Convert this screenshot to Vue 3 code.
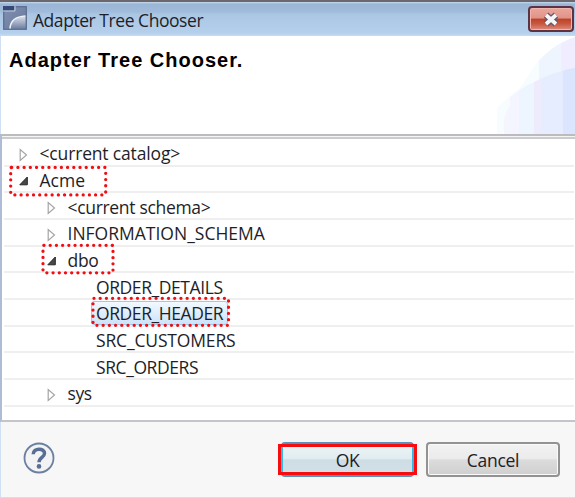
<script setup>
const rows = [
  { label: '<current catalog>', level: 0, state: 'closed', fit: 'snug' },
  { label: 'Acme', level: 0, state: 'open', mark: 'acme' },
  { label: '<current schema>', level: 1, state: 'closed', fit: 'tight' },
  { label: 'INFORMATION_SCHEMA', level: 1, state: 'closed' },
  { label: 'dbo', level: 1, state: 'open', mark: 'dbo', fit: 'tight' },
  { label: 'ORDER_DETAILS', level: 2, fit: 'tighter' },
  { label: 'ORDER_HEADER', level: 2, mark: 'header', selected: true, fit: 'tighter' },
  { label: 'SRC_CUSTOMERS', level: 2, fit: 'snug' },
  { label: 'SRC_ORDERS', level: 2, fit: 'tighter' },
  { label: 'sys', level: 1, state: 'closed', fit: 'tighter' },
]
const marks = { acme: [10.7, 2.4, 95, 27.5], dbo: [43, 0.3, 70, 27.5], header: [93, 0.3, 135.500, 27] }
</script>

<template>
  <div class="dialog">
    <header class="titlebar">
      <svg class="app-icon" width="24" height="24" viewBox="0 0 24 24">
        <defs>
          <linearGradient id="ic" x1="0" y1="0" x2="1" y2="1">
            <stop offset="0" stop-color="#8290b0" /><stop offset="1" stop-color="#65799d" />
          </linearGradient>
          <linearGradient id="sw" x1="0" y1="0" x2="0" y2="1">
            <stop offset="0" stop-color="#d8dee8" /><stop offset="1" stop-color="#6e80a2" />
          </linearGradient>
        </defs>
        <rect x=".7" y=".7" width="22.6" height="22.6" fill="url(#ic)" stroke="#5b6b8c" stroke-width="1.2" />
        <path d="M8 22.500C8.500 15 13 11 22.500 10.500V22.500Z" fill="url(#sw)" />
        <path d="M7 22.500C7.500 14 13 10.500 22.500 10" fill="none" stroke="#f1f4f8" stroke-width="1.500" />
        <path d="M0 0H11V4.500H0Z" fill="#344a78" />
        <path d="M0 5H12V0" fill="none" stroke="#c2cddd" stroke-width="1" />
      </svg>
      <span class="title">Adapter Tree Chooser</span>
      <button class="close" aria-label="Close">
        <svg width="18" height="15" viewBox="0 0 18 15">
          <path d="M4 3L14 12M14 3L4 12" stroke="#64566a" stroke-width="6.400" />
          <path d="M4 3L14 12M14 3L4 12" stroke="#f6f6f8" stroke-width="3.800" />
        </svg>
      </button>
    </header>

    <section class="banner">
      <h1>Adapter Tree Chooser.</h1>
      <svg class="swoosh" width="80" height="98" viewBox="0 0 80 98">
        <defs>
          <clipPath id="outer"><path d="M80 1C62 7 50 17 40 29C34 37 30 45 25 52C16 59 7 66 2 72V98H80Z" /></clipPath>
          <clipPath id="inner"><path d="M80 32C61 35 43 43 26 53L15 61V70C10 78 8 81 9 98H80Z" /></clipPath>
        </defs>
        <g clip-path="url(#outer)">
          <path d="M0 0H44V98H0Z" fill="#f7fdff" />
          <path d="M44 0H66V98H44Z" fill="#eef5ff" />
          <path d="M66 0H80V98H66Z" fill="#efedff" />
        </g>
        <g clip-path="url(#inner)">
          <path d="M0 0H24V98H0Z" fill="#f5f5ff" />
          <path d="M24 0H39V98H24Z" fill="#edf5ff" />
          <path d="M39 0H46V98H39Z" fill="#eeebfd" />
          <path d="M46 0H68V98H46Z" fill="#e6edfe" />
          <path d="M68 0H80V98H68Z" fill="#dce5fe" />
        </g>
      </svg>
    </section>

    <main class="tree">
      <div v-for="row in rows" :key="row.label" class="row" :class="'level-' + row.level">
        <span v-if="row.selected" class="selection"></span>
        <svg v-if="row.state" class="arrow" width="10" height="14" viewBox="0 0 10 14">
          <path v-if="row.state === 'closed'" d="M1.200 1.500V12.500L7.500 7Z" fill="#fff" stroke="#a5a5a5" stroke-width="1.200" />
          <path v-else d="M8.300 3V10.800H.8Z" fill="#484848" stroke="#252525" />
        </svg>
        <span class="label" :class="row.fit">{{ row.label }}</span>
        <svg v-if="row.mark" class="mark" width="240" height="30" viewBox="0 0 240 30">
          <rect
            :x="marks[row.mark][0]" :y="marks[row.mark][1]"
            :width="marks[row.mark][2]" :height="marks[row.mark][3]" rx="1"
          />
        </svg>
      </div>
    </main>

    <footer class="footer">
      <svg class="help" width="32" height="32" viewBox="0 0 32 32">
        <circle cx="16" cy="16" r="14.500" fill="#f3f3f5" stroke="#6b7f9f" stroke-width="1.800" />
        <path d="M10.200 12.300C10.200 5.500 21.800 5.700 21.500 11.500C21.300 15.500 16 15.300 16 20.300" fill="none" stroke="#586e94" stroke-width="3.500" />
        <circle cx="16" cy="24.400" r="2.300" fill="#586e94" />
      </svg>
      <button class="btn ok"><span>OK</span></button>
      <button class="btn cancel"><span>Cancel</span></button>
    </footer>
  </div>
</template>

<style>
body { margin: 0; overflow: hidden; }
</style>

<style scoped>
* { box-sizing: border-box; }
.dialog {
  width: 575px; height: 498px; display: flex; flex-direction: column;
  border-left: 1px solid #cfe0f3; border-bottom: 1px solid #cfe0f3;
  background: #f7f7f7; color: #1e1e28;
  font: 17.500px/26px "Open Sans", "Noto Sans", sans-serif;
}
.titlebar {
  height: 36px; flex: none; display: flex; align-items: flex-start;
  padding: 4px 1px 0 2px; margin-left: -1px; border-top: 2px solid #6c676c;
  background: linear-gradient(#c7dcf0 0, #9bb5d6 2px, #a1bbdb 10px, #aac6e3 12px, #b5d0ec 31px, #c6dcf2 34px);
}
.app-icon { margin: 0 6px 0 1px; flex: none; }
.title { line-height: 24px; letter-spacing: -.45px; white-space: nowrap; margin-top: 2px; }
.close {
  margin-left: auto; width: 46px; height: 26px; padding: 0; display: grid; place-items: center;
  border: 2px solid #5b3345; border-radius: 4px; box-shadow: inset 0 0 0 1px #f0b6ad;
  background: linear-gradient(#eaa79d 0, #e19387 46%, #bd4128 50%, #c75840 72%, #dc8e7d 100%);
}
.banner { height: 98px; flex: none; display: flex; justify-content: space-between; background: #fff; overflow: hidden; }
h1 { margin: 12px 0 0 8px; font: bold 20px/24px "Liberation Sans", Arial, sans-serif; letter-spacing: 1px; color: #000; white-space: nowrap; }
.swoosh { flex: none; }
.tree {
  height: 288px; flex: none; margin-left: -1px;
  border-left: 2px solid #afbcd8; border-top: 2px solid #bcbcbe; border-bottom: 2px solid #c4c4ca;
  background: linear-gradient(#f5f5f5 0, #f5f5f5 1px, #cccbd0 1px, #cccbd0 3px, #fff 3px);
}
.tree::before { content: ""; display: block; height: 4px; }
.row { position: relative; height: 26.670px; display: flex; align-items: center; margin: 0 1px 0 2px; border-bottom: 2px solid #efefef; }
.level-0 { padding-left: 15px; }
.level-1 { padding-left: 43px; }
.level-2 { padding-left: 92px; }
.arrow { flex: none; margin: 5px 10.500px 0 0; }
.label { position: relative; line-height: 24px; padding-top: 2px; white-space: nowrap; }
.snug { letter-spacing: -.16px; }
.tight { letter-spacing: -.32px; }
.tighter { letter-spacing: -.42px; }
.selection { position: absolute; left: 87px; top: 1px; width: 137px; height: 24px; border: 1px solid #9fc9eb; border-radius: 3px; background: linear-gradient(#f2f9ff, #cce3fa); }
.mark { position: absolute; left: -4px; top: -2px; overflow: visible; }
.mark rect { fill: none; stroke: #f20d12; stroke-width: 3.300; stroke-linecap: round; stroke-dasharray: .01 6.200; }
.footer { flex: 1; display: flex; align-items: flex-start; padding: 20px 15px 0 22px; }
.help { margin-right: auto; }
.btn { width: 134px; height: 35px; padding: 1px 0 0; border: 2px solid #929292; border-radius: 4px; color: #202028; font: inherit; letter-spacing: -.3px; box-shadow: inset 0 0 0 1px #fafafa; background: linear-gradient(#f2f2f2 0, #ebebeb 48%, #dcdcdc 51%, #cfcfcf 100%); }
.cancel { margin-left: 12px; }
.ok { position: relative; border-color: #5c91bb; width: 133px; box-shadow: none; background: linear-gradient(#edf5f8 0, #e1ecf0 48%, #cedde4 51%, #d2dfe6 100%); }
.ok::after { content: ""; position: absolute; inset: 0 -5px; border: 3px solid #f50d10; box-shadow: inset 2px 0 #36b7e5, inset -2px 0 #36b7e5; }
</style>
